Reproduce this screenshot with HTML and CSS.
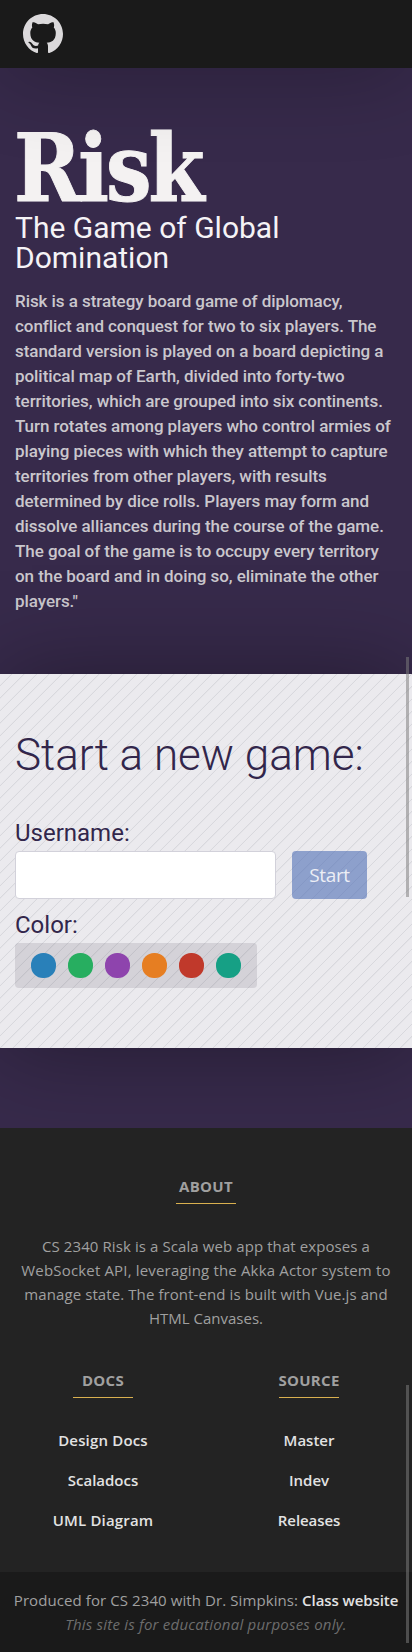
FILE: index.html
```html
<!DOCTYPE html>
<html lang="en">
<head>
<meta charset="utf-8">
<title>Risk</title>
<link rel="stylesheet" href="styles.css">
</head>
<body>
<nav class="navbar">
  <a class="github" aria-label="GitHub">
    <svg width="40" height="40" viewBox="0 0 16 16"><path fill="#dbd9db" d="M8 0C3.58 0 0 3.58 0 8c0 3.54 2.29 6.53 5.47 7.59.4.07.55-.17.55-.38 0-.19-.01-.82-.01-1.49-2.01.37-2.53-.49-2.69-.94-.09-.23-.48-.94-.82-1.13-.28-.15-.68-.52-.01-.53.63-.01 1.08.58 1.23.82.72 1.21 1.87.87 2.33.66.07-.52.28-.87.51-1.07-1.78-.2-3.64-.89-3.64-3.95 0-.87.31-1.59.82-2.15-.08-.2-.36-1.02.08-2.12 0 0 .67-.21 2.2.82.64-.18 1.32-.27 2-.27s1.36.09 2 .27c1.53-1.04 2.2-.82 2.2-.82.44 1.1.16 1.92.08 2.12.51.56.82 1.27.82 2.15 0 3.07-1.87 3.75-3.65 3.95.29.25.54.73.54 1.48 0 1.07-.01 1.93-.01 2.2 0 .21.15.46.55.38A8.01 8.01 0 0 0 16 8c0-4.42-3.58-8-8-8z"/></svg>
  </a>
</nav>
<header class="hero">
  <h1 class="title">Risk</h1>
  <h2 class="subtitle">The Game of Global<br>Domination</h2>
  <p class="intro">Risk is a strategy board game of diplomacy,<br>conflict and conquest for two to six players. The<br>standard version is played on a board depicting a<br>political map of Earth, divided into forty-two<br>territories, which are grouped into six continents.<br>Turn rotates among players who control armies of<br>playing pieces with which they attempt to capture<br>territories from other players, with results<br>determined by dice rolls. Players may form and<br>dissolve alliances during the course of the game.<br>The goal of the game is to occupy every territory<br>on the board and in doing so, eliminate the other<br>players."</p>
</header>
<main class="start">
  <h2 class="start-title">Start a new game:</h2>
  <label class="label" for="username">Username:</label>
  <div class="row">
    <input class="input" id="username" type="text">
    <button class="button" type="button">Start</button>
  </div>
  <div class="label">Color:</div>
  <div class="colors">
    <span class="color blue"></span><span class="color green"></span><span class="color purple"></span><span class="color orange"></span><span class="color red"></span><span class="color teal"></span>
  </div>
  <span class="scrollbar start-scroll"></span>
</main>
<div class="gap"></div>
<footer class="footer">
  <section class="about">
    <h3 class="heading">ABOUT</h3>
    <p class="about-text"><span class="snug">CS 2340 Risk is a Scala web app that exposes a</span><br><span class="wide">WebSocket API, leveraging the Akka Actor system to</span><br><span class="snug">manage state. The front-end is built with Vue.js and</span><br>HTML Canvases.</p>
  </section>
  <div class="columns">
    <section class="column">
      <h3 class="heading">DOCS</h3>
      <a class="link wide">Design Docs</a><a class="link">Scaladocs</a><a class="link wide">UML Diagram</a>
    </section>
    <section class="column">
      <h3 class="heading">SOURCE</h3>
      <a class="link">Master</a><a class="link">Indev</a><a class="link tight">Releases</a>
    </section>
  </div>
  <div class="credits">
    <p class="snug">Produced for CS 2340 with Dr. Simpkins: <a class="site tight">Class website</a></p>
    <p class="notice">This site is for educational purposes only.</p>
  </div>
  <span class="scrollbar footer-scroll"></span>
</footer>
</body>
</html>
```
FILE: styles.css
```css
* { box-sizing: border-box; margin: 0; padding: 0; }
body { background: #372a4b; font-family: Roboto, sans-serif; width: 412px; overflow-x: hidden; }
.navbar { position: relative; z-index: 2; height: 68px; padding: 13.5px 23.3px; background: #1a1a1a; box-shadow: 0 0 90px rgba(0,0,0,.3); }
.github, .github svg { display: block; }
.hero { height: 606px; padding: 48px 15px 0; }
.title { width: 240px; padding-top: 5px; margin-left: -1.5px; font-family: "Roboto Slab", "DejaVu Serif", serif; font-weight: 700; font-size: 93px; line-height: 96px; height: 97px; letter-spacing: -3.5px; color: #f4f2f2; -webkit-text-stroke: 1px #f4f2f2; transform: scaleX(.87); transform-origin: 0 0; }
.subtitle { font-weight: 400; font-size: 30px; line-height: 30px; color: #f5f3f6; }
.intro { margin-top: 16px; font-weight: 500; font-size: 17px; line-height: 25px; letter-spacing: -.06px; color: #cac7cd; white-space: nowrap; }
.start { position: relative; z-index: 1; height: 374px; padding: 56px 15px 0; box-shadow: 0 0 90px rgba(0,0,0,.35);
  background: repeating-linear-gradient(-45deg, #ebeaee 0 7.6px, #d8d8dd 8px 8.5px, #ebeaee 8.84px); }
.start-title { font-weight: 300; font-size: 44px; line-height: 50px; color: #32264b; white-space: nowrap; }
.label { display: block; font-size: 24px; line-height: 28px; color: #32264b; }
.start-title + .label { margin-top: 39px; margin-bottom: 4px; }
.row { display: flex; gap: 16px; margin-bottom: 12px; }
.input { width: 261px; height: 48px; background: #fff; border: 1px solid #d2d1da; border-radius: 4px; }
.button { width: 75px; height: 48px; border: 0; border-radius: 4px; background: rgba(78,110,182,.6); color: #eceef5; font: 500 19px "Open Sans", "Noto Sans", sans-serif; letter-spacing: -.4px; }
.colors { margin-top: 4px; display: flex; gap: 12px; width: 242px; height: 45px; padding: 10px 16px; border-radius: 4px; background: rgba(50,38,60,.12); }
.color { width: 25px; height: 25px; border-radius: 12px; }
.blue { background: #2980b9; }
.green { background: #27ae60; }
.purple { background: #8e44ad; }
.orange { background: #e67e22; }
.red { background: #c0392b; }
.teal { background: #16a085; }
.scrollbar { position: absolute; z-index: 3; left: 406px; width: 3px; background: rgba(124,124,124,.53); }
.start-scroll { top: -17px; height: 240px; }
.footer-scroll { top: 257px; height: 258px; }
.gap { height: 80px; }
.footer { position: relative; z-index: 2; height: 524px; padding-top: 46px; background: #232323; color: #a0a0a0; font: 15px/24px "Open Sans", "Noto Sans", sans-serif; text-align: center; display: flex; flex-direction: column; }
.heading { display: flex; flex-direction: column; align-items: center; font-size: 15px; line-height: 24px; font-weight: 700; letter-spacing: .3px; }
.heading::after { content: ""; width: 60px; height: 1px; margin-top: 5px; background: #d9b04f; }
.about-text { margin-top: 30px; white-space: nowrap; }
.columns { display: grid; grid-template-columns: 1fr 1fr; margin-top: 38px; }
.column { display: flex; flex-direction: column; gap: 16px; }
.column .heading { margin-bottom: 14px; }
.link, .site { font-weight: 600; color: #e2e2e2; }
.credits { margin-top: auto; height: 80px; padding-top: 16px; background: #1a1a1a; white-space: nowrap; }
.snug { letter-spacing: .09px; }
.wide { letter-spacing: .17px; }
.tight { letter-spacing: -.08px; }
.notice { font-style: italic; letter-spacing: .22px; color: #6d6d6d; }
```
